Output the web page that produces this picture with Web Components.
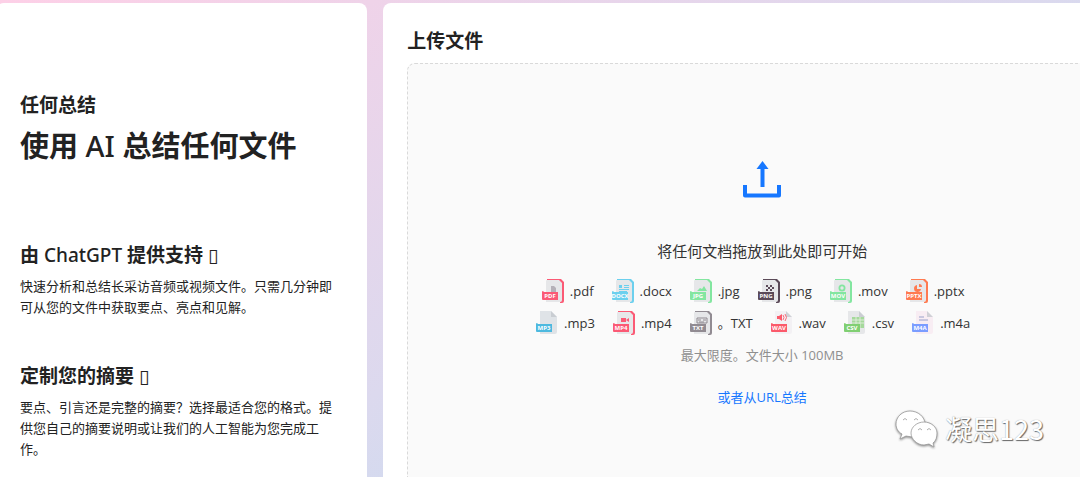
<!DOCTYPE html>
<html lang="zh-CN">
<head>
<meta charset="utf-8">
<title>任何总结</title>
<style>
html{height:100%}
body{margin:0;min-height:100%;overflow:hidden;font-family:"Open Sans","Noto Sans CJK SC",sans-serif;font-size:13px;color:#222}
</style>
</head>
<body>
<summary-page>
  <surface-card slot="intro">
    <page-intro>
      <span slot="name">任何总结</span>
      <span slot="title">使用<latin-text> AI </latin-text>总结任何文件</span>
      <feature-note>
        <span slot="heading">由 <latin-text>ChatGPT</latin-text> 提供支持 <latin-text>▯</latin-text></span>
        快速分析和总结长采访音频或视频文件。只需几分钟即可从您的文件中获取要点、亮点和见解。
      </feature-note>
      <feature-note>
        <span slot="heading">定制您的摘要<latin-text>▯</latin-text></span>
        要点、引言还是完整的摘要？选择最适合您的格式。提供您自己的摘要说明或让我们的人工智能为您完成工作。
      </feature-note>
    </page-intro>
  </surface-card>
  <surface-card slot="upload"><upload-panel></upload-panel></surface-card>
  <account-mark slot="mark">凝思123</account-mark>
</summary-page>

<script>
const define = (name, html) => {
  const t = document.createElement('template');
  t.innerHTML = html;
  customElements.define(name, class extends HTMLElement {
    constructor() {
      super();
      this.attachShadow({mode: 'open'}).append(t.content.cloneNode(true));
    }
  });
};

define('summary-page', `
<style>
:host{display:block;position:relative;min-height:100vh;box-sizing:border-box;overflow:hidden;padding-top:3px;
  background:linear-gradient(149deg,#fdd0e7 0%,#efd3e9 20%,#dcd9ee 55%,#d4daef 64%)}
main{display:grid;grid-template-columns:49fr 100fr;gap:16px;margin:0 -61px 0 -4px;min-height:calc(100vh - 3px)}
::slotted([slot=mark]){position:absolute;right:36px;bottom:28px}
</style>
<main><slot name="intro"></slot><slot name="upload"></slot></main>
<slot name="mark"></slot>`);

define('surface-card', `
<style>
:host{display:flex;flex-direction:column;box-sizing:border-box;min-width:0;padding:24px 24px 0;background:#fff;border-radius:8px 8px 0 0}
</style><slot></slot>`);

define('latin-text', `
<style>:host{font-family:"Noto Sans","DejaVu Sans",sans-serif;font-weight:500}</style><slot></slot>`);

define('page-intro', `
<style>
:host{display:block;padding-top:64px}
p,h1{margin:0;font-weight:700}
p{font-size:19px;line-height:28px}
h1{font-size:29px;line-height:40px;margin-top:7px}
section{display:flex;flex-direction:column;gap:44px;margin-top:75px}
</style>
<p><slot name="name"></slot></p>
<h1><slot name="title"></slot></h1>
<section><slot></slot></section>`);

define('feature-note', `
<style>
:host{display:block}
h2{margin:0 0 7px;font-size:19px;line-height:28px;font-weight:700}
p{margin:0;line-height:21px}
</style>
<h2><slot name="heading"></slot></h2><p><slot></slot></p>`);

const art = {
  doc: '<path d="M9 7h3l2 2v4H9z" fill="#b5b1b8"/>',
  lines: '<path d="M7 6h3v3H7zM12 6h5v1h-5zM12 8h5v1h-5zM7 10h10v1H7zM7 12h8v1H7z" fill="var(--c)"/>',
  image: '<path d="M7 12l3-3 2 1 2-3 3 5z" fill="var(--c)"/>',
  check: '<path d="M8 6h2v2H8zM12 6h2v2h-2zM10 8h2v2h-2zM14 8h2v2h-2zM8 10h2v2H8zM12 10h2v2h-2z" fill="var(--c)"/>',
  play: '<circle cx="12" cy="9" r="2.6" fill="none" stroke="var(--c)" stroke-width="1.8"/>',
  pie: '<path d="M11 6a3.5 3.5 0 1 0 4 4h-4zM13 5v3h3a3 3 0 0 0-3-3z" fill="var(--c)"/>',
  camera: '<path d="M8 7h5v4H8zM13 9l3-2v4z" fill="var(--c)"/>',
  text: '<path d="M7 7h10v5H7z" fill="none" stroke="var(--c)"/><path d="M8 9h3M13 9h3M9 11h5" stroke="var(--c)"/>',
  sound: '<path d="M6 5h2l3-2v7L8 8H6z" fill="var(--c)"/><path d="M12 4q2 2.500 0 5M14 3q3 3.500 0 7" fill="none" stroke="var(--c)" stroke-width=".9"/>',
  grid: '<path d="M8 6h12v11H8z" fill="#a5d99b"/><path d="M8 9h12M8 12h12M12 6v11M16 6v11" stroke="#e3eddf" stroke-width=".9"/>',
  bars: '<path d="M7 5h5v2H7zM7 8h9v2H7z" fill="#c9c7df"/>',
  none: ''
};

customElements.define('file-type', class extends HTMLElement {
  connectedCallback() {
    const kind = this.getAttribute('kind'), tag = this.getAttribute('tag');
    const edge = this.hasAttribute('edge');
    const page = this.getAttribute('page') || '#e6e7e9';
    const sheet = edge
      ? `<path d="M5 0h14l3 3v19q0 2-2 2h-2V2H5z" fill="var(--c)"/><path d="M4 2q0-1 1-1h12l3 3v17q0 2-2 2H4z" fill="${page}"/>`
      : `<path d="M4 0h11l6 6v15q0 2-2 2H4z" fill="${page}"/><path d="M15 0l6 6h-6z" fill="#bfc3c9" opacity=".7"/>`;
    this.attachShadow({mode: 'open'}).innerHTML = `
<style>
:host{display:flex;align-items:center;gap:6px;margin-right:18px;--c:${this.getAttribute('tint')}}
svg{display:block;width:22px;height:24px}
text{font:700 6px "Open Sans",sans-serif;fill:#fff}
</style>
<svg viewBox="0 0 22 24" aria-hidden="true">${sheet}${art[kind]}
<path d="M0 13q0-1 1-1l1 1h14v8H1q-1 0-1-1z" fill="var(--c)"/>
<text x="8" y="19" text-anchor="middle">${tag}</text></svg><span><slot></slot></span>`;
  }
});

define('upload-panel', `
<style>
:host{display:flex;flex-direction:column;flex:1}
h2{margin:0 0 8px;font-size:19px;line-height:28px;font-weight:700}
.drop{flex:1;display:flex;flex-direction:column;align-items:center;box-sizing:border-box;padding-top:97px;
  background:#fafafa;border:1px dashed #d9d9d9;border-bottom:0;border-radius:8px 8px 0 0}
.up{display:block;width:40px;height:38px}
.lead{margin:40px 0 0;font-size:15px;line-height:24px;color:#333}
.types{display:flex;justify-content:center;line-height:24px;color:#333}
.types+.types{margin-top:8px}
.lead+.types{margin-top:16px}
.limit{margin:8px 0 0;line-height:24px;color:#8f8f8f}
a{margin-top:18px;line-height:24px;color:#1677ff;text-decoration:none}
</style>
<h2>上传文件</h2>
<div class="drop">
<svg class="up" viewBox="0 0 40 38" aria-hidden="true"><path d="M20.500 0l6 8h-4v18h-4V8h-4z" fill="#1677ff"/><path d="M3 24v10.500h34V24" fill="none" stroke="#1677ff" stroke-width="4" stroke-linejoin="round"/></svg>
<p class="lead">将任何文档拖放到此处即可开始</p>
<div class="types">
<file-type edge kind="doc" tag="PDF" tint="#fb5a75">.pdf</file-type>
<file-type edge kind="lines" tag="DOCX" tint="#6cd0ee">.docx</file-type>
<file-type edge kind="image" tag="JPG" tint="#83e6a0">.jpg</file-type>
<file-type edge kind="check" tag="PNG" tint="#5b4a58">.png</file-type>
<file-type edge kind="play" tag="MOV" tint="#83e6a0">.mov</file-type>
<file-type edge kind="pie" tag="PPTX" tint="#ff7a50">.pptx</file-type>
</div>
<div class="types">
<file-type kind="none" tag="MP3" tint="#4db9df" page="#dfe3e7">.mp3</file-type>
<file-type edge kind="camera" tag="MP4" tint="#fb5a75">.mp4</file-type>
<file-type edge kind="text" tag="TXT" tint="#918b92">。TXT</file-type>
<file-type kind="sound" tag="WAV" tint="#fb5a6b" page="#f3f1f4">.wav</file-type>
<file-type kind="grid" tag="CSV" tint="#80cf72">.csv</file-type>
<file-type kind="bars" tag="M4A" tint="#7b9dff" page="#f8edf3">.m4a</file-type>
</div>
<p class="limit">最大限度。文件大小 100MB</p>
<a href="#url">或者从URL总结</a>
</div>`);

define('account-mark', `
<style>
:host{display:flex;align-items:center;gap:7px;font:400 27px/40px "Noto Sans CJK SC",sans-serif;color:#fff;text-shadow:1px 1px 1px #666,0 0 1px #999}
svg{width:43px;height:38px;filter:drop-shadow(0 1px 1px #888)}
</style>
<svg viewBox="0 0 43 38" aria-hidden="true"><g fill="#fff" stroke="#999" stroke-width=".8">
<path d="M15 1C7 1 1 7 1 14c0 4 2 8 6 10l-2 5 6-3c12 3 19-3 19-12C30 7 23 1 15 1z"/>
<path d="M29 12c-7 0-13 5-13 11s6 12 13 12l5-1 5 3-1-4c3-2 4-6 4-10 0-6-6-11-13-11z"/>
<path d="M8 10q2-3 4 0M19 10q2-3 4 0M23 20q2-3 4 0M32 20q2-3 4 0" fill="none"/></g></svg>
<span><slot></slot></span>`);
</script>
</body>
</html>
